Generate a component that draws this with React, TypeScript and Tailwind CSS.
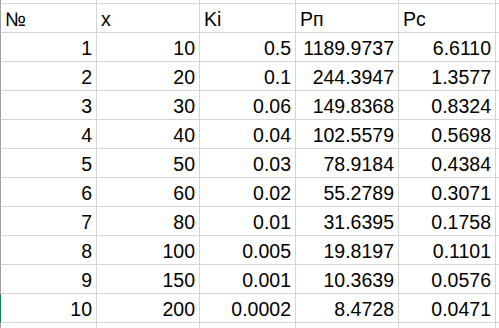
import React from "react";

const rows: string[][] = [
  ["1", "10", "0.5", "1189.9737", "6.6110"],
  ["2", "20", "0.1", "244.3947", "1.3577"],
  ["3", "30", "0.06", "149.8368", "0.8324"],
  ["4", "40", "0.04", "102.5579", "0.5698"],
  ["5", "50", "0.03", "78.9184", "0.4384"],
  ["6", "60", "0.02", "55.2789", "0.3071"],
  ["7", "80", "0.01", "31.6395", "0.1758"],
  ["8", "100", "0.005", "19.8197", "0.1101"],
  ["9", "150", "0.001", "10.3639", "0.0576"],
  ["10", "200", "0.0002", "8.4728", "0.0471"],
];

const headers = ["№", "x", "Ki", "Рп", "Рс"];

const gridCols = "grid grid-cols-[97px_103px_96px_103px_97px_1fr]";
const cell = "border-r border-b border-[#d4d4d4] flex items-end pb-[2px]";

export default function App() {
  return (
    <div
      className="w-[499px] h-[328px] overflow-hidden bg-white text-black text-[19.5px] leading-[22px]"
      style={{ fontFamily: '"Liberation Sans", Arial, sans-serif' }}
    >
      {/* partially visible row above */}
      <div className={`${gridCols} h-[4px]`}>
        {[0, 1, 2, 3, 4].map((i) => (
          <div
            key={i}
            className={`border-r border-b border-[#d4d4d4] ${i === 0 ? "border-l border-l-[#a0a0a0]" : ""}`}
          />
        ))}
        <div className="border-b border-[#d4d4d4]" />
      </div>

      {/* header row */}
      <div className={`${gridCols} h-[29px]`}>
        {headers.map((h, i) => (
          <div
            key={h}
            className={`${cell} justify-start pl-[4px] ${i === 0 ? "border-l border-l-[#a0a0a0]" : ""}`}
          >
            {h}
          </div>
        ))}
        <div className="border-b border-[#d4d4d4]" />
      </div>

      {/* data rows */}
      {rows.map((r, ri) => (
        <div key={ri} className={`${gridCols} h-[29px]`}>
          {r.map((v, ci) => (
            <div
              key={ci}
              className={`${cell} justify-end pr-[4px] ${
                ci === 0
                  ? ri === rows.length - 1
                    ? "border-l border-l-[#217346]"
                    : "border-l border-l-[#a0a0a0]"
                  : ""
              }`}
            >
              {v}
            </div>
          ))}
          <div className="border-b border-[#d4d4d4]" />
        </div>
      ))}

      {/* row below */}
      <div className={`${gridCols} h-[29px]`}>
        {[0, 1, 2, 3, 4].map((i) => (
          <div
            key={i}
            className={`border-r border-[#d4d4d4] ${i === 0 ? "border-l border-l-[#a0a0a0]" : ""}`}
          />
        ))}
        <div />
      </div>
    </div>
  );
}
